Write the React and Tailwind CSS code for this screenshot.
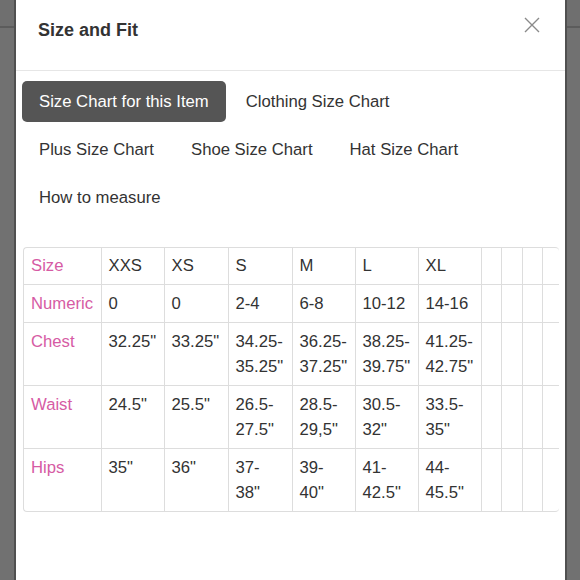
import React from "react";

const font = { fontFamily: '"Liberation Sans", Arial, sans-serif' };

const tabs = [
  "Size Chart for this Item",
  "Clothing Size Chart",
  "Plus Size Chart",
  "Shoe Size Chart",
  "Hat Size Chart",
  "How to measure",
];

const rows = [
  ["Size", "XXS", "XS", "S", "M", "L", "XL"],
  ["Numeric", "0", "0", "2-4", "6-8", "10-12", "14-16"],
  ["Chest", '32.25"', '33.25"', "34.25-|35.25\"", "36.25-|37.25\"", "38.25-|39.75\"", "41.25-|42.75\""],
  ["Waist", '24.5"', '25.5"', "26.5-|27.5\"", "28.5-|29,5\"", "30.5-|32\"", "33.5-|35\""],
  ["Hips", '35"', '36"', "37-|38\"", "39-|40\"", "41-|42.5\"", "44-|45.5\""],
];

const widths = [77, 63, 64, 64, 63, 63, 63, 20, 21, 20, 40];

export default function App() {
  return (
    <div
      className="w-[580px] h-[580px] overflow-hidden bg-[linear-gradient(to_bottom,#6f6f6f_26px,#5c5c5c_26px,#5c5c5c_28px,#717171_28px)]"
      style={font}
    >
      <div className="ml-[14px] w-[553px] h-[580px] bg-white border-l-2 border-r-2 border-[#505050] flex flex-col">
        <div className="h-[71px] border-b border-[#e6e6e6] flex items-start justify-between pl-[22px] pr-[24px]">
          <div className="mt-[17px] text-[18px] font-bold text-[#333]">Size and Fit</div>
          <svg width="18" height="18" viewBox="0 0 18 18" className="mt-[16px]">
            <path d="M2 2L16 16M16 2L2 16" stroke="#8a8a8a" strokeWidth="1.4" fill="none" />
          </svg>
        </div>
        <div className="pt-[10px] pl-[6px] w-[541px] flex flex-wrap">
          {tabs.map((t, i) => (
            <div
              key={t}
              className={
                "h-[41px] px-[17px] mr-[3px] mb-[7px] flex items-center rounded-[5px] text-[16.7px] whitespace-nowrap " +
                (i === 0 ? "bg-[#555555] text-white" : "text-[#333]")
              }
            >
              {t}
            </div>
          ))}
        </div>
        <div className="mt-[22px] ml-[7px] w-[536px] border-l border-t border-b border-[#dddddd] rounded-[4px] overflow-hidden">
          <table className="table-fixed border-collapse w-[556px] text-[16.7px] leading-[25px]">
            <colgroup>
              {widths.map((w, i) => (
                <col key={i} style={{ width: w }} />
              ))}
            </colgroup>
            <tbody>
              {rows.map((r, ri) => (
                <tr key={ri}>
                  {widths.map((w, ci) => {
                    const v = r[ci];
                    const lines = v ? v.split("|") : ["\u00a0"];
                    return (
                      <td
                        key={ci}
                        className={
                          "align-top pl-[7px] pr-[1px] whitespace-nowrap " +
                          (ri === 0 ? "pt-[5px] pb-[6px] " : "pt-[6px] pb-[6px] ") +
                          (ri < rows.length - 1 ? "border-b border-[#dddddd] " : "") +
                          (ci < widths.length - 1 ? "border-r border-[#dddddd] " : "") +
                          (ci === 0 ? "text-[#d65ba4]" : "text-[#333]")
                        }
                      >
                        {lines.map((l, li) => (
                          <div key={li}>{l}</div>
                        ))}
                      </td>
                    );
                  })}
                </tr>
              ))}
            </tbody>
          </table>
        </div>
      </div>
    </div>
  );
}
